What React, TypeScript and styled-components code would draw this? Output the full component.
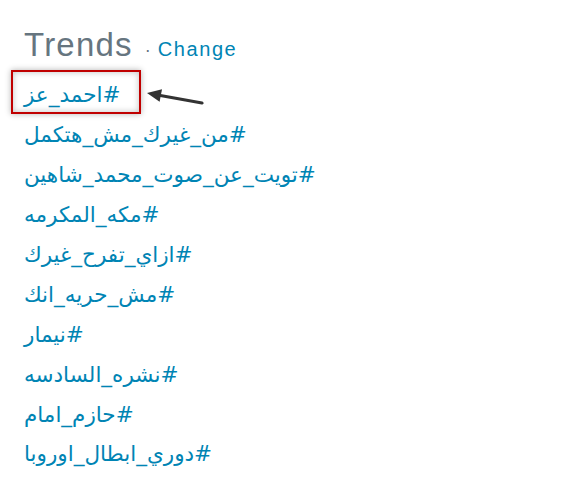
import React from "react";
import styled, { createGlobalStyle } from "styled-components";

const Global = createGlobalStyle`
  html, body { margin: 0; padding: 0; background: #ffffff; }
  body { font-family: "Liberation Sans", Arial, sans-serif; }
`;

const Panel = styled.div`
  width: 561px;
  height: 497px;
  box-sizing: border-box;
  padding: 25px 0 0 24px;
  display: flex;
  flex-direction: column;
  align-items: flex-start;
`;

const Header = styled.div`
  display: flex;
  align-items: baseline;
  height: 50px;
`;

const Title = styled.h3`
  margin: 0;
  font-family: "Liberation Sans", Arial, sans-serif;
  font-size: 33px;
  font-weight: normal;
  letter-spacing: 1.2px;
  color: #66757f;
  line-height: 40px;
`;

const Dot = styled.span`
  font-size: 18px;
  color: #66757f;
  margin: 0 7px 0 12px;
`;

const ChangeLink = styled.a`
  font-size: 20px;
  letter-spacing: 1.6px;
  color: #0084b4;
  text-decoration: none;
`;

const List = styled.ul`
  list-style: none;
  margin: 0;
  padding: 0;
  display: flex;
  flex-direction: column;
  align-items: flex-start;
`;

const Item = styled.li`
  position: relative;
  height: 39.9px;
  display: flex;
  align-items: center;
`;

const Tag = styled.a`
  direction: rtl;
  unicode-bidi: isolate;
  font-family: "DejaVu Sans", "Liberation Sans", sans-serif;
  font-size: 21.5px;
  color: #0084b4;
  text-decoration: none;
`;

const Highlight = styled.span`
  position: absolute;
  left: -13px;
  top: -5px;
  width: 130px;
  height: 44px;
  box-sizing: border-box;
  border: 2px solid #c00000;
  box-shadow: 0 0 6px rgba(0, 0, 0, 0.3), inset 0 0 6px rgba(0, 0, 0, 0.25);
  pointer-events: none;
`;

const Arrow = styled.svg`
  position: absolute;
  left: 120px;
  top: 10px;
  overflow: visible;
`;

const trends = [
  "#احمد_عز",
  "#من_غيرك_مش_هتكمل",
  "#تويت_عن_صوت_محمد_شاهين",
  "#مكه_المكرمه",
  "#ازاي_تفرح_غيرك",
  "#مش_حريه_انك",
  "#نيمار",
  "#نشره_السادسه",
  "#حازم_امام",
  "#دوري_ابطال_اوروبا",
];

export default function App() {
  return (
    <>
      <Global />
      <Panel>
        <Header>
          <Title>Trends</Title>
          <Dot>·</Dot>
          <ChangeLink href="#">Change</ChangeLink>
        </Header>
        <List>
          {trends.map((t, i) => (
            <Item key={t}>
              <Tag href="#" dir="rtl">{t}</Tag>
              {i === 0 && (
                <>
                  <Highlight />
                  <Arrow width="60" height="24" viewBox="0 0 60 24">
                    <line x1="58" y1="18" x2="15" y2="10.2" stroke="#333" strokeWidth="3" strokeLinecap="round" />
                    <polygon points="3,8 18,4.2 15.6,16.8" fill="#333" />
                  </Arrow>
                </>
              )}
            </Item>
          ))}
        </List>
      </Panel>
    </>
  );
}
